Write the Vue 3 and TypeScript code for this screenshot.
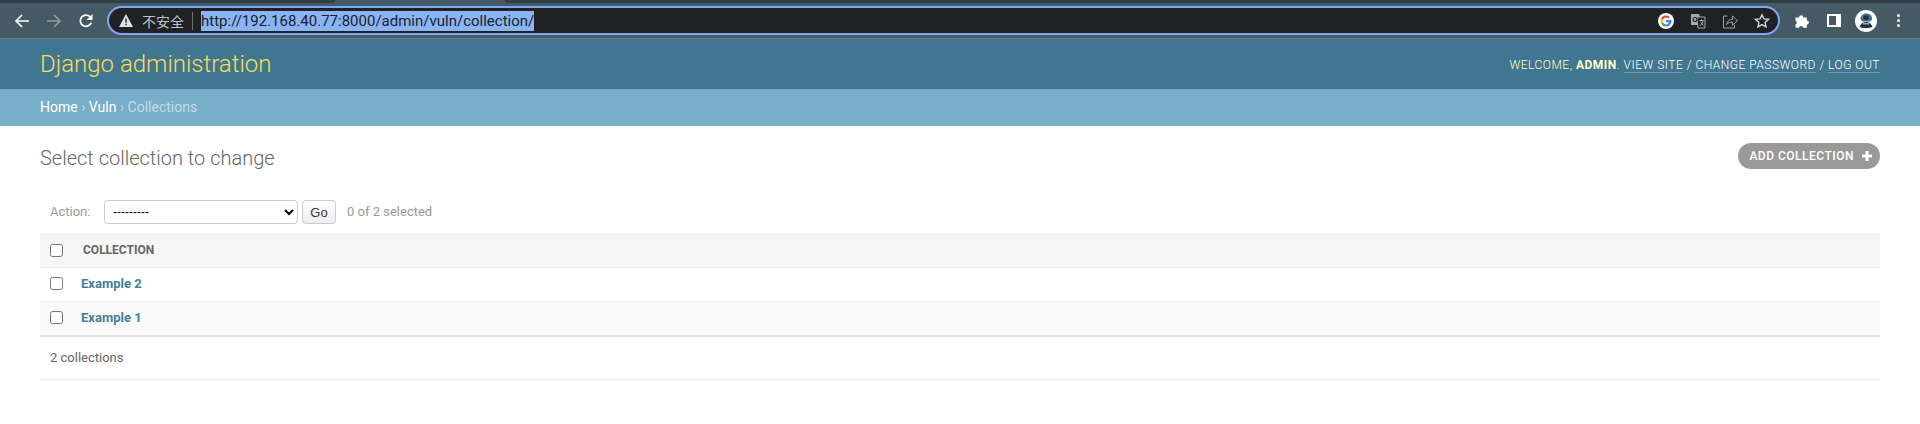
<template>
  <div class="page">
    <div class="chrome">
      <div class="tabstrip"><span class="tab-left"></span><span class="tab-active"></span><span class="tab-right"></span></div>
      <div class="toolbar">
        <svg class="nav" viewBox="0 0 16 16" width="16" height="16"><path d="M15 8H2M8 2 2 8l6 6" fill="none" stroke="#fff" stroke-width="1.7" /></svg>
        <svg class="nav" viewBox="0 0 16 16" width="16" height="16"><path d="M1 8h13M8 2l6 6-6 6" fill="none" stroke="#8f9ca3" stroke-width="1.7" /></svg>
        <svg class="nav" viewBox="0 0 16 16" width="16" height="16">
          <path d="M13.2 9.600A5.600 5.600 0 1 1 12 3.900" fill="none" stroke="#fff" stroke-width="1.800" />
          <path d="M14.500 1v6h-6z" fill="#fff" />
        </svg>
        <div class="omnibox">
          <svg class="warn" viewBox="0 0 14 13" width="14" height="13"><path d="M7 0 14 13H0z" fill="#dfe1e3" /><path d="M6.300 4.500h1.400v4.300H6.300zM6.300 9.800h1.400v1.400H6.300z" fill="#202124" /></svg>
          <span class="insecure">不安全</span>
          <span class="sep"></span>
          <span class="url">http://192.168.40.77:8000/admin/vuln/collection/</span>
          <span class="spacer"></span>
          <svg class="omni-icon" viewBox="0 0 16 16" width="16" height="16">
            <circle cx="8" cy="8" r="8" fill="#fff" />
            <path d="M8 7v2.200h3.100A3.200 3.200 0 0 1 8 11.400V13.600a5.400 5.400 0 0 0 5.500-5.600c0-.4 0-.7-.1-1z" fill="#4285f4" />
            <path d="M4.900 9.100 3.400 11A5.500 5.500 0 0 0 8 13.600v-2.200a3.300 3.300 0 0 1-3.100-2.300z" fill="#34a853" />
            <path d="M4.900 9.100a3.400 3.400 0 0 1 0-2.200L3.400 5a5.600 5.600 0 0 0 0 6z" fill="#fbbc05" />
            <path d="M8 4.600c.9 0 1.600.3 2.200.9l1.600-1.600A5.500 5.500 0 0 0 3.400 5l1.500 1.900A3.300 3.300 0 0 1 8 4.600z" fill="#ea4335" />
          </svg>
          <svg class="omni-icon" viewBox="0 0 16 16" width="16" height="16">
            <path d="M1 1h8l1 2.500V12H1z" fill="#a5a7a9" />
            <path d="M7 4h8v11H8z" fill="#202124" stroke="#a5a7a9" />
            <circle cx="5" cy="6.500" r="2" fill="none" stroke="#202124" stroke-width="1.200" />
            <path d="M9.500 7.500h4M11.500 6.500v1M10 12.500c2-1 3-3 3-5M10.500 9.500l3 3" fill="none" stroke="#a5a7a9" />
          </svg>
          <svg class="omni-icon" viewBox="0 0 16 16" width="16" height="16">
            <path d="M5.500 3H1.500v12h11v-3" fill="none" stroke="#9aa0a6" />
            <path d="M4.500 11.500C5 8 7.500 6.300 10.500 6.300V3l5 4.700-5 4.500V9.200C8.500 9 6 9.700 4.500 11.500z" fill="none" stroke="#9aa0a6" />
          </svg>
          <svg class="omni-icon last" viewBox="0 0 16 16" width="16" height="16">
            <path d="m8 1.800 1.900 4.100 4.500.5-3.300 3 .9 4.400L8 11.600l-4 2.200.9-4.400-3.300-3 4.500-.5z" fill="none" stroke="#d3d6d8" stroke-width="1.400" />
          </svg>
        </div>
        <svg class="tool ext" viewBox="0 0 16 16" width="16" height="16">
          <path d="M1.500 4.500h3.500a2.200 2.200 0 0 1 4.400 0h3.400v3a2.100 2.100 0 0 1 0 4.200v3H9.300a2.200 2.200 0 0 0-4.300 0H1.500v-3.200a2.100 2.100 0 0 0 0-3.800z" fill="#fff" />
        </svg>
        <svg class="tool side" viewBox="0 0 14 13" width="14" height="13"><path d="M0 0h14v13H0zM2 2v9h7V2z" fill="#fff" fill-rule="evenodd" /></svg>
        <svg class="tool avatar" viewBox="0 0 22 22" width="22" height="22">
          <circle cx="11" cy="11" r="11" fill="#fff" />
          <path d="M5.500 8.500C6 5 8.500 3.500 11.500 3.500s5.500 2 5.500 5c0 1.500-1 2.500-2 3H8c-1.500-.5-2.700-1.500-2.500-3z" fill="#3f7391" />
          <path d="M9 5.500h4l1 3-3 2-3-2z" fill="#24333c" />
          <path d="M4.500 17c1-3 3-5 6.500-5s5.500 2 6.500 5c-3.500 1.500-9.500 1.500-13 0z" fill="#24333c" />
          <path d="M8 13h6v1.500H8z" fill="#8fb4c8" />
        </svg>
        <span class="dots"><i></i><i></i><i></i></span>
      </div>
    </div>

    <header class="site-header">
      <h1 class="branding">Django administration</h1>
      <div class="user-tools">
        WELCOME, <strong>ADMIN</strong>.
        <a>VIEW SITE</a> / <a>CHANGE PASSWORD</a> / <a>LOG OUT</a>
      </div>
    </header>

    <div class="breadcrumbs">
      <a>Home</a> › <a>Vuln</a> › Collections
    </div>

    <main class="content">
      <div class="title-row">
        <h2 class="page-title">Select collection to change</h2>
        <a class="addlink">
          ADD COLLECTION
          <svg viewBox="0 0 12 12" width="12" height="12"><path d="M4.500 1h3v3.500H11v3H7.500V11h-3V7.500H1v-3h3.500z" fill="#fff" /></svg>
        </a>
      </div>

      <div class="actions">
        <label class="action-label" for="action-select">Action:</label>
        <select id="action-select" class="action-select">
          <option>---------</option>
          <option>Delete selected collections</option>
        </select>
        <button class="go">Go</button>
        <span class="counter">0 of 2 selected</span>
      </div>

      <div class="result-list">
        <div class="row head">
          <input type="checkbox" class="check" />
          <span class="col-head">COLLECTION</span>
        </div>
        <div v-for="(item, i) in items" :key="item" class="row" :class="i % 2 ? 'alt' : ''">
          <input type="checkbox" class="check" />
          <a class="item-link">{{ item }}</a>
        </div>
      </div>

      <p class="paginator">2 collections</p>
    </main>
  </div>
</template>

<script setup lang="ts">
const items: string[] = ['Example 2', 'Example 1']
</script>

<style>
html,
body {
  margin: 0;
  background: #fff;
}
</style>

<style scoped>
.page {
  height: 424px;
  overflow: hidden;
  font-family: Roboto, 'Liberation Sans', sans-serif;
  font-weight: 300;
  color: #333;
}

.chrome {
  height: 39px;
  background: #455a64;
  border-bottom: 1px solid #6b7d86;
  box-sizing: border-box;
}

.tabstrip {
  height: 3px;
  display: flex;
}

.tab-left {
  width: 335px;
  background: #2f3f45;
  border-bottom-right-radius: 3px;
}

.tab-active {
  width: 170px;
}

.tab-right {
  flex: 1;
  background: #2f3f45;
  border-bottom-left-radius: 3px;
}

.toolbar {
  height: 35px;
  display: flex;
  align-items: center;
}

.nav {
  margin-left: 16px;
  flex: none;
}

.nav:first-child {
  margin-left: 14px;
}

.omnibox {
  height: 25px;
  width: 1669px;
  margin-left: 13px;
  border: 2px solid #7baaf0;
  border-radius: 16px;
  background: #202124;
  display: flex;
  align-items: center;
  flex: none;
}

.warn {
  margin-left: 10px;
}

.insecure {
  margin-left: 9px;
  width: 42px;
  color: #bdc1c6;
  font-size: 14px;
  font-weight: 400;
  font-family: 'Noto Sans CJK SC', sans-serif;
}

.sep {
  width: 1px;
  height: 18px;
  background: #6f7275;
  margin: 0 8px;
}

.url {
  background: #8ab4f8;
  color: #202124;
  font-family: Roboto, sans-serif;
  font-weight: 400;
  font-size: 15px;
  line-height: 20px;
}

.spacer {
  flex: 1;
}

.omni-icon {
  margin-right: 16px;
}

.omni-icon.last {
  margin-right: 8px;
}

.tool {
  flex: none;
}

.ext {
  margin-left: 14px;
}

.side {
  margin-left: 17px;
}

.avatar {
  margin-left: 14px;
}

.dots {
  margin-left: 20px;
  display: flex;
  flex-direction: column;
  gap: 2px;
}

.dots i {
  width: 3px;
  height: 3px;
  border-radius: 50%;
  background: #fff;
}

.site-header {
  height: 50px;
  background: #417690;
  padding: 0 40px;
  display: flex;
  justify-content: space-between;
  align-items: center;
}

.branding {
  margin: 0;
  font-size: 24px;
  font-weight: 300;
  color: #f5dd5d;
}

.user-tools {
  font-size: 12px;
  font-weight: 300;
  letter-spacing: 0.5px;
  color: #ffc;
  margin-top: 1px;
}

.user-tools strong {
  font-weight: 700;
}

.user-tools a {
  color: #fff;
  border-bottom: 1px solid rgba(255, 255, 255, 0.25);
}

.breadcrumbs {
  height: 37px;
  line-height: 37px;
  box-sizing: border-box;
  background: #79aec8;
  padding: 0 40px;
  font-size: 14px;
  font-weight: 400;
  color: #c4dce8;
}

.breadcrumbs a {
  color: #fff;
}

.content {
  padding: 17px 40px 0;
}

.title-row {
  display: flex;
  justify-content: space-between;
  align-items: flex-start;
}

.page-title {
  margin: 3px 0 0;
  font-size: 20px;
  line-height: 24px;
  font-weight: 300;
  color: #666;
}

.addlink {
  height: 26px;
  box-sizing: border-box;
  padding: 0 7px 0 11px;
  border-radius: 15px;
  background: #999;
  color: #fff;
  font-size: 12px;
  font-weight: 500;
  letter-spacing: 0.5px;
  display: flex;
  align-items: center;
  gap: 7px;
}

.actions {
  margin-top: 30px;
  height: 24px;
  padding-left: 10px;
  display: flex;
  align-items: center;
  font-size: 13px;
  font-weight: 400;
  color: #999;
}

.action-label {
  width: 54px;
  margin-bottom: 2px;
}

.action-select {
  width: 194px;
  height: 24px;
  box-sizing: border-box;
  border: 1px solid #ccc;
  border-radius: 4px;
  padding: 0 0 0 4px;
  background: #fff;
  color: #000;
  font-family: 'Liberation Sans', sans-serif;
  font-size: 12px;
}

.go {
  width: 34px;
  height: 24px;
  margin-left: 4px;
  padding: 0;
  border: 1px solid #ccc;
  border-radius: 4px;
  background: linear-gradient(#fff, #ededed);
  color: #333;
  font-family: 'Liberation Sans', sans-serif;
  font-size: 13px;
}

.counter {
  margin-left: 11px;
  margin-bottom: 2px;
}

.result-list {
  margin-top: 10px;
}

.row {
  height: 34px;
  box-sizing: border-box;
  border-bottom: 1px solid #eee;
  display: flex;
  align-items: center;
  padding: 0 0 2px 10px;
  font-size: 13px;
}

.row.head {
  background: #f6f6f6;
  border-top: 1px solid #eee;
}

.row.alt {
  height: 35px;
  background: #f9f9f9;
  border-bottom: 2px solid #e3e3e3;
}

.check {
  width: 13px;
  height: 13px;
  margin: 0;
  flex: none;
}

.col-head {
  margin-left: 20px;
  font-size: 12px;
  font-weight: 700;
  color: #666;
}

.item-link {
  margin-left: 18px;
  font-weight: 700;
  font-size: 13px;
  color: #447e9b;
}

.paginator {
  margin: 0;
  height: 43px;
  line-height: 42px;
  box-sizing: border-box;
  padding-left: 10px;
  border-bottom: 1px solid #eee;
  font-size: 13px;
  font-weight: 400;
  color: #666;
}
</style>
